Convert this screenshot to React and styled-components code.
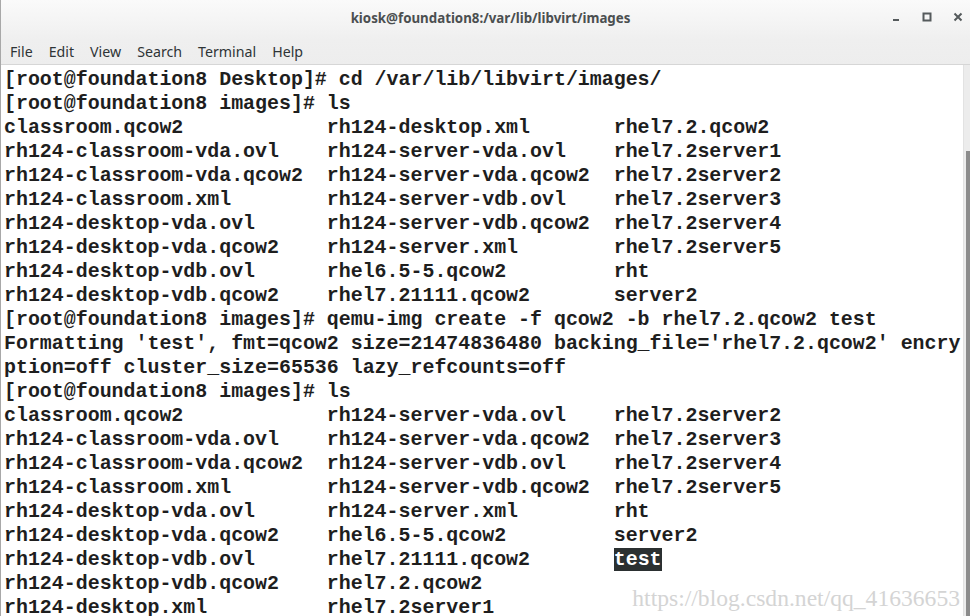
import React from 'react'
import styled, { createGlobalStyle } from 'styled-components'

const GlobalStyle = createGlobalStyle`
  html, body {
    margin: 0;
    padding: 0;
    width: 970px;
    height: 616px;
    overflow: hidden;
    background: #ffffff;
  }
`

const pad = (s, n) => s + ` `.repeat(Math.max(0, n - s.length))
const row = (a, b, c) => pad(a, 27) + pad(b, 24) + c

const lines = [
  { text: `[root@foundation8 Desktop]# cd /var/lib/libvirt/images/` },
  { text: `[root@foundation8 images]# ls` },
  { text: row(`classroom.qcow2`, `rh124-desktop.xml`, `rhel7.2.qcow2`) },
  { text: row(`rh124-classroom-vda.ovl`, `rh124-server-vda.ovl`, `rhel7.2server1`) },
  { text: row(`rh124-classroom-vda.qcow2`, `rh124-server-vda.qcow2`, `rhel7.2server2`) },
  { text: row(`rh124-classroom.xml`, `rh124-server-vdb.ovl`, `rhel7.2server3`) },
  { text: row(`rh124-desktop-vda.ovl`, `rh124-server-vdb.qcow2`, `rhel7.2server4`) },
  { text: row(`rh124-desktop-vda.qcow2`, `rh124-server.xml`, `rhel7.2server5`) },
  { text: row(`rh124-desktop-vdb.ovl`, `rhel6.5-5.qcow2`, `rht`) },
  { text: row(`rh124-desktop-vdb.qcow2`, `rhel7.21111.qcow2`, `server2`) },
  { text: `[root@foundation8 images]# qemu-img create -f qcow2 -b rhel7.2.qcow2 test` },
  { text: `Formatting 'test', fmt=qcow2 size=21474836480 backing_file='rhel7.2.qcow2' encry` },
  { text: `ption=off cluster_size=65536 lazy_refcounts=off` },
  { text: `[root@foundation8 images]# ls` },
  { text: row(`classroom.qcow2`, `rh124-server-vda.ovl`, `rhel7.2server2`) },
  { text: row(`rh124-classroom-vda.ovl`, `rh124-server-vda.qcow2`, `rhel7.2server3`) },
  { text: row(`rh124-classroom-vda.qcow2`, `rh124-server-vdb.ovl`, `rhel7.2server4`) },
  { text: row(`rh124-classroom.xml`, `rh124-server-vdb.qcow2`, `rhel7.2server5`) },
  { text: row(`rh124-desktop-vda.ovl`, `rh124-server.xml`, `rht`) },
  { text: row(`rh124-desktop-vda.qcow2`, `rhel6.5-5.qcow2`, `server2`) },
  { text: pad(`rh124-desktop-vdb.ovl`, 27) + pad(`rhel7.21111.qcow2`, 24), mark: `test` },
  { text: row(`rh124-desktop-vdb.qcow2`, `rhel7.2.qcow2`, ``) },
  { text: row(`rh124-desktop.xml`, `rhel7.2server1`, ``) },
]

const menus = [`File`, `Edit`, `View`, `Search`, `Terminal`, `Help`]

const App = () => {
  return (
    <Window>
      <GlobalStyle />
      <Header>
        <TitleBar>
          <Title>kiosk@foundation8:/var/lib/libvirt/images</Title>
          <Controls>
            <Control>
              <svg width="10" height="10" viewBox="0 0 10 10"><rect x="2" y="7" width="6" height="2" fill="#555a5c" /></svg>
            </Control>
            <Control>
              <svg width="10" height="10" viewBox="0 0 10 10"><rect x="1.5" y="1.5" width="7" height="7" fill="none" stroke="#555a5c" strokeWidth="2" /></svg>
            </Control>
            <Control>
              <svg width="10" height="10" viewBox="0 0 10 10"><path d="M1.5 1.5 L8.5 8.5 M8.5 1.5 L1.5 8.5" stroke="#555a5c" strokeWidth="2" /></svg>
            </Control>
          </Controls>
        </TitleBar>
        <MenuBar>
          {menus.map(m => <MenuItem key={m}>{m}</MenuItem>)}
        </MenuBar>
      </Header>
      <Body>
        <Screen>
          {lines.map((line, i) => (
            <Line key={i}>
              {line.text}
              {line.mark && <Mark>{line.mark}</Mark>}
            </Line>
          ))}
        </Screen>
        <ScrollTrough>
          <Thumb />
        </ScrollTrough>
        <Watermark>https://blog.csdn.net/qq_41636653</Watermark>
      </Body>
    </Window>
  )
}

export default App

const Window = styled.div`
  width: 970px;
  height: 616px;
  display: flex;
  flex-direction: column;
  overflow: hidden;
  border-left: 1px solid #a8a8a8;
  box-sizing: border-box;
`
const Header = styled.div`
  height: 64px;
  flex-shrink: 0;
  background: linear-gradient(#fafafa 0px, #efefef 40px, #ededed 64px);
  border-bottom: 1px solid #d6d6d6;
  display: flex;
  flex-direction: column;
`
const TitleBar = styled.div`
  height: 36px;
  display: flex;
  align-items: center;
  justify-content: center;
  position: relative;
`
const Title = styled.div`
  font-family: "Noto Sans", "DejaVu Sans", sans-serif;
  font-weight: 700;
  font-size: 13.3px;
  color: #4b4f50;
  margin-left: 10px;
`
const Controls = styled.div`
  position: absolute;
  right: 6px;
  top: 11px;
  display: flex;
  gap: 19px;
`
const Control = styled.div`
  width: 12px;
  height: 12px;
  display: flex;
  align-items: center;
  justify-content: center;
`
const MenuBar = styled.div`
  flex: 1;
  display: flex;
  align-items: center;
  padding-left: 9px;
  gap: 16px;
  padding-top: 3px;
`
const MenuItem = styled.div`
  font-family: "Noto Sans", "DejaVu Sans", sans-serif;
  font-size: 14.2px;
  color: #2e3436;
`
const Body = styled.div`
  flex: 1;
  display: flex;
  position: relative;
  background: #ffffff;
`
const Screen = styled.div`
  flex: 1;
  padding: 3px 0 0 3px;
  overflow: hidden;
`
const Line = styled.div`
  font-family: "Liberation Mono", "Courier New", monospace;
  font-weight: 700;
  font-size: 19.93px;
  line-height: 24px;
  height: 24px;
  white-space: pre;
  color: #1e1e1e;
`
const Mark = styled.span`
  background: #2b3031;
  color: #ffffff;
`
const ScrollTrough = styled.div`
  width: 6px;
  flex-shrink: 0;
  background: #ececec;
  border-left: 1px solid #e2e2e2;
  padding-top: 86px;
  display: flex;
  justify-content: flex-end;
`
const Thumb = styled.div`
  width: 4px;
  height: 100%;
  background: #8c8c8c;
`
const Watermark = styled.div`
  position: absolute;
  right: 10px;
  bottom: 8px;
  font-family: "Liberation Serif", "Times New Roman", serif;
  font-size: 23.6px;
  color: #d4d4d4;
  pointer-events: none;
`
